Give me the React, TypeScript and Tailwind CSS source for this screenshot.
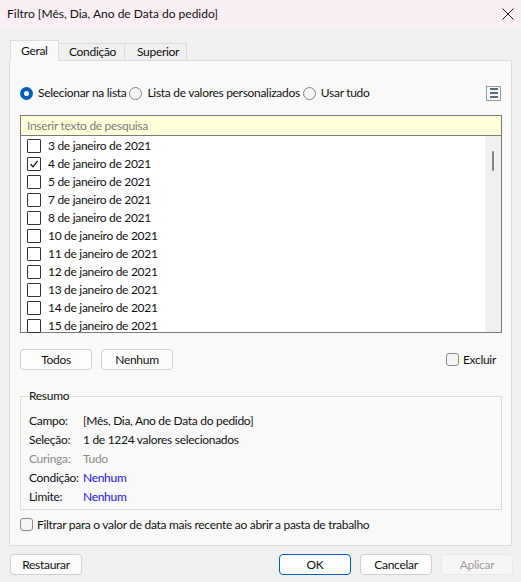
import { Fragment } from 'react';

const dias = [3, 4, 5, 7, 8, 10, 11, 12, 13, 14, 15];

function Radio({ checked }: { checked?: boolean }) {
  if (checked) {
    return (
      <span className="w-[13px] h-[13px] rounded-full bg-[#005fb8] flex items-center justify-center shrink-0">
        <span className="w-[5px] h-[5px] rounded-full bg-white" />
      </span>
    );
  }
  return <span className="w-[13px] h-[13px] rounded-full border border-[#858585] bg-[#f5f5f5] shrink-0" />;
}

function ListCheck({ checked }: { checked?: boolean }) {
  return (
    <span className="w-[14px] h-[14px] border border-[#333333] bg-white rounded-[1px] flex items-center justify-center shrink-0">
      {checked && (
        <svg width="10" height="10" viewBox="0 0 10 10">
          <path d="M1.5 5.2 L4 7.8 L8.6 1.8" fill="none" stroke="#111" strokeWidth="1.3" />
        </svg>
      )}
    </span>
  );
}

function WinCheck() {
  return <span className="w-[13px] h-[13px] border border-[#8a8a8a] bg-[#f6f6f6] rounded-[3px] shrink-0" />;
}

function Btn({ children, kind }: { children: string; kind?: 'primary' | 'disabled' }) {
  const cls =
    kind === 'primary'
      ? 'border-[#005fb8] bg-[#fdfdfd] text-[#111111]'
      : kind === 'disabled'
      ? 'border-[#e8e8e8] bg-[#f6f6f6] text-[#9d9d9d]'
      : 'border-[#d1d1d1] bg-[#fdfdfd] text-[#111111]';
  return (
    <button className={`w-[72px] h-[21px] border rounded-[4px] flex items-center justify-center ${cls}`}>
      {children}
    </button>
  );
}

export default function App() {
  const resumo: [string, string, string, string][] = [
    ['Campo:', '[Mês, Dia, Ano de Data do pedido]', 'text-[#111111]', 'text-[#111111]'],
    ['Seleção:', '1 de 1224 valores selecionados', 'text-[#111111]', 'text-[#111111]'],
    ['Curinga:', 'Tudo', 'text-[#8c8c8c]', 'text-[#8c8c8c]'],
    ['Condição:', 'Nenhum', 'text-[#111111]', 'text-[#1515ff]'],
    ['Limite:', 'Nenhum', 'text-[#111111]', 'text-[#1515ff]'],
  ];

  return (
    <div className="w-[521px] h-[582px] bg-[#f0f0f0] text-[12px] tracking-[-0.3px] text-[#111111] overflow-hidden font-['Lato','Noto_Sans',sans-serif] leading-none">
      {/* barra de título */}
      <div className="h-[28px] bg-[#f8eef3] flex items-center justify-between pl-[7px] pr-[7px]">
        <span className="text-[12px] tracking-normal">Filtro [Mês, Dia, Ano de Data do pedido]</span>
        <svg width="12" height="12" viewBox="0 0 12 12">
          <path d="M0.5 0.5 L11.5 11.5 M11.5 0.5 L0.5 11.5" stroke="#1b1b1b" strokeWidth="1" />
        </svg>
      </div>

      <div className="px-[9px] pt-[12px]">
        {/* abas */}
        <div className="flex items-end h-[20px] pl-[1px]">
          <div className="w-[49px] h-[21px] -mb-[1px] bg-[#f9f9f9] border border-b-0 border-[#dcdcdc] flex items-center pl-[10px] relative z-10">
            Geral
          </div>
          <div className="w-[66px] h-[17px] border-t border-r border-[#dcdcdc] flex items-center pl-[10px]">Condição</div>
          <div className="w-[62px] h-[17px] border-t border-r border-[#dcdcdc] flex items-center pl-[12px]">Superior</div>
        </div>

        {/* painel */}
        <div className="h-[486px] border border-[#dcdcdc] bg-[#f9f9f9] pl-[10px] pr-[9px] pt-[24px]">
          <div className="h-[16px] flex items-center">
            <div className="flex items-center gap-[5px]">
              <Radio checked />
              <span>Selecionar na lista</span>
            </div>
            <div className="flex items-center gap-[5px] ml-[3px]">
              <Radio />
              <span>Lista de valores personalizados</span>
            </div>
            <div className="flex items-center gap-[5px] ml-[3px]">
              <Radio />
              <span>Usar tudo</span>
            </div>
            <div className="ml-auto mr-[1px] w-[15px] h-[15px] border border-[#9a9a9a] flex flex-col items-center justify-center gap-[2px]">
              <span className="w-[8px] h-[2px] bg-[#5b6b7e]" />
              <span className="w-[8px] h-[2px] bg-[#5b6b7e]" />
              <span className="w-[8px] h-[2px] bg-[#5b6b7e]" />
            </div>
          </div>

          {/* pesquisa + lista */}
          <div className="mt-[14px] border border-[#7a7a7a]">
            <div className="h-[20px] bg-[#ffffd9] border-b border-[#7a7a7a] flex items-center pl-[6px] text-[#7d7d7d]">
              Inserir texto de pesquisa
            </div>
            <div className="h-[196px] bg-white flex">
              <div className="flex-1 pl-[6px] pt-[1px]">
                {dias.map(d => (
                  <div key={d} className="h-[18px] flex items-center gap-[7px]">
                    <ListCheck checked={d === 4} />
                    <span>{d} de janeiro de 2021</span>
                  </div>
                ))}
              </div>
              <div className="w-[16px] bg-[#f0f0f0] flex justify-center pt-[15px]">
                <span className="w-[2px] h-[20px] bg-[#858585] rounded-full" />
              </div>
            </div>
          </div>

          {/* botões da lista */}
          <div className="mt-[16px] flex items-center">
            <Btn>Todos</Btn>
            <div className="ml-[9px]">
              <Btn>Nenhum</Btn>
            </div>
            <div className="ml-auto mr-[6px] flex items-center gap-[4px]">
              <WinCheck />
              <span>Excluir</span>
            </div>
          </div>

          {/* resumo */}
          <div className="mt-[26px] border border-[#dcdcdc] h-[114px] pl-[8px]">
            <div className="-mt-[7px] w-fit bg-[#f9f9f9] pr-[2px]">Resumo</div>
            <div className="mt-[11px] grid grid-cols-[54px_1fr] gap-y-[3px]">
              {resumo.map(([k, v, kc, vc]) => (
                <Fragment key={k}>
                  <div className={`h-[16px] flex items-center ${kc}`}>{k}</div>
                  <div className={`h-[16px] flex items-center ${vc}`}>{v}</div>
                </Fragment>
              ))}
            </div>
          </div>

          <div className="mt-[8px] flex items-center gap-[4px]">
            <WinCheck />
            <span>Filtrar para o valor de data mais recente ao abrir a pasta de trabalho</span>
          </div>
        </div>

        {/* botões do diálogo */}
        <div className="mt-[8px] flex items-center pl-[1px]">
          <Btn>Restaurar</Btn>
          <div className="ml-auto flex gap-[9px] mr-[-1px]">
            <Btn kind="primary">OK</Btn>
            <Btn>Cancelar</Btn>
            <Btn kind="disabled">Aplicar</Btn>
          </div>
        </div>
      </div>
    </div>
  );
}
